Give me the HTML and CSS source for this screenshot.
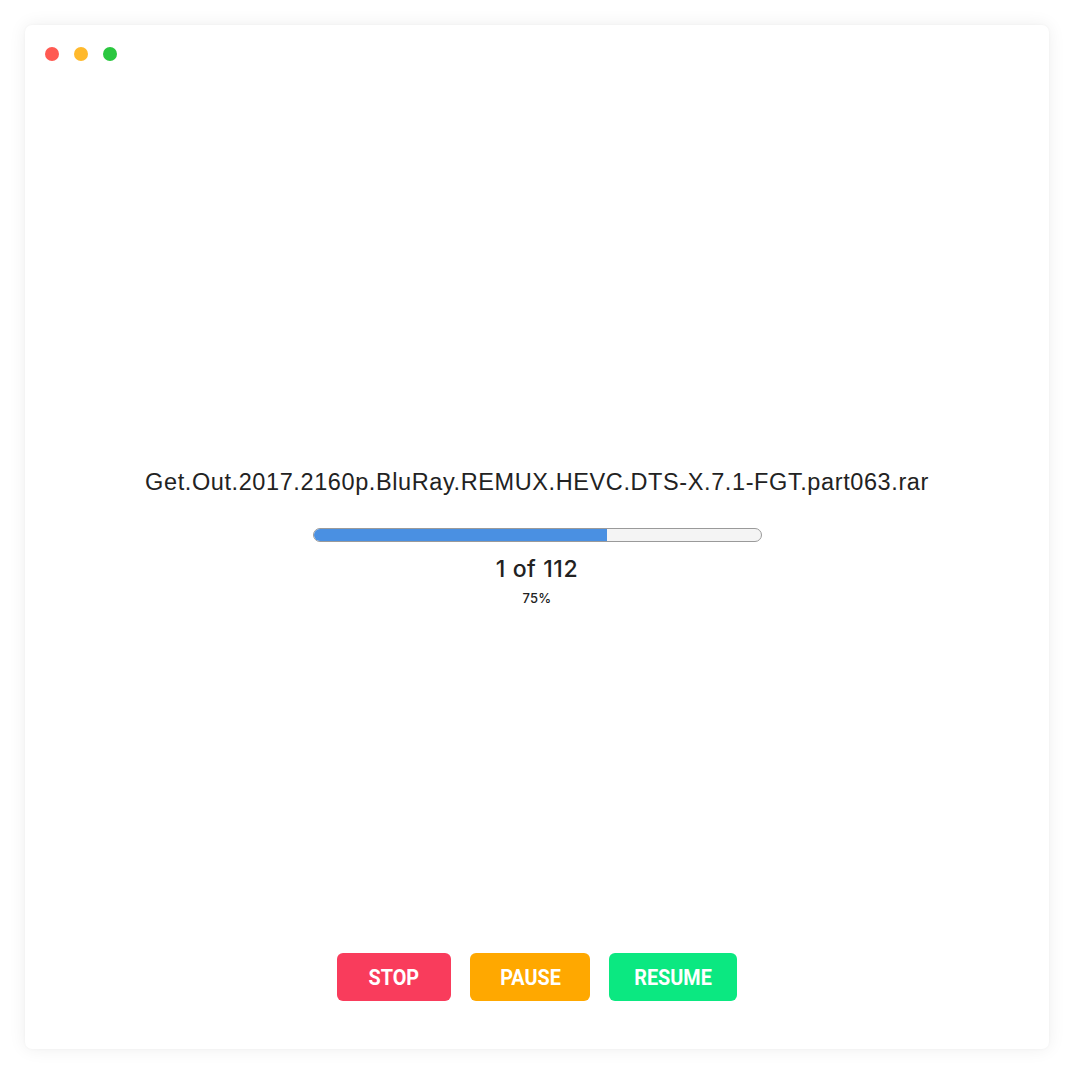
FILE: index.html
```html
<!DOCTYPE html>
<html lang="en">
<head>
<meta charset="utf-8">
<title>Extracting</title>
<link rel="stylesheet" href="styles.css">
</head>
<body>
<div class="window">
  <div class="titlebar">
    <span class="light red"></span>
    <span class="light yellow"></span>
    <span class="light green"></span>
  </div>
  <main class="content">
    <div class="filename">Get.Out.2017.2160p.BluRay.REMUX.HEVC.DTS-X.7.1-FGT.part063.rar</div>
    <div class="progress"><div class="fill" style="width: 65.7%"></div></div>
    <div class="count">1 of 112</div>
    <div class="percent">75%</div>
  </main>
  <footer class="actions">
    <button class="btn stop"><span class="label">STOP</span></button>
    <button class="btn pause"><span class="label">PAUSE</span></button>
    <button class="btn resume"><span class="label">RESUME</span></button>
  </footer>
</div>
</body>
</html>
```

FILE: styles.css
```css
html, body {
  margin: 0;
  padding: 0;
  background: #ffffff;
}
body {
  width: 1074px;
  height: 1074px;
  padding: 25px;
  box-sizing: border-box;
  font-family: "Liberation Sans", Arial, sans-serif;
}
.window {
  width: 1024px;
  height: 1024px;
  background: #ffffff;
  border-radius: 7px;
  box-shadow: 0 0 18px rgba(0, 0, 0, 0.07), 0 0 3px rgba(0, 0, 0, 0.04);
  display: grid;
  grid-template-rows: 1fr auto 1fr;
  box-sizing: border-box;
}
.titlebar {
  display: flex;
  gap: 15px;
  padding: 22px 0 0 20px;
  align-items: flex-start;
}
.light {
  width: 14px;
  height: 14px;
  border-radius: 50%;
  display: block;
}
.light.red { background: #ff5a52; }
.light.yellow { background: #ffb92c; }
.light.green { background: #2ac73f; }
.content {
  display: flex;
  flex-direction: column;
  align-items: center;
}
.filename {
  font-family: "Liberation Sans", Arial, sans-serif;
  font-size: 23.5px;
  letter-spacing: 0.6px;
  line-height: 26px;
  color: #222222;
}
.progress {
  margin-top: 33px;
  width: 449px;
  height: 14px;
  box-sizing: border-box;
  border: 1px solid #9a9a9a;
  border-radius: 7px;
  background: #f4f4f4;
  overflow: hidden;
}
.fill {
  height: 100%;
  background: #4a90e2;
}
.count {
  margin-top: 14px;
  font-family: Inter, "Noto Sans", sans-serif;
  font-weight: 500;
  font-size: 23px;
  letter-spacing: 0.6px;
  line-height: 26px;
  color: #222222;
}
.percent {
  margin-top: 8px;
  font-family: Inter, "Noto Sans", sans-serif;
  font-weight: 500;
  font-size: 13px;
  letter-spacing: 0.3px;
  line-height: 16px;
  color: #222222;
}
.actions {
  display: flex;
  justify-content: center;
  align-items: flex-end;
  gap: 19px;
  padding-bottom: 48px;
}
.btn {
  height: 48px;
  border: none;
  border-radius: 6px;
  color: #ffffff;
  font-family: Roboto, "Liberation Sans", sans-serif;
  font-weight: 700;
  font-size: 22.5px;
  padding: 0;
  display: flex;
  align-items: center;
  justify-content: center;
  cursor: pointer;
}
.label {
  display: inline-block;
  transform: scaleX(0.88);
}
.btn.stop { background: #f93c5c; width: 114px; }
.btn.pause { background: #ffa800; width: 120px; }
.btn.resume { background: #0be881; width: 128px; }
```
